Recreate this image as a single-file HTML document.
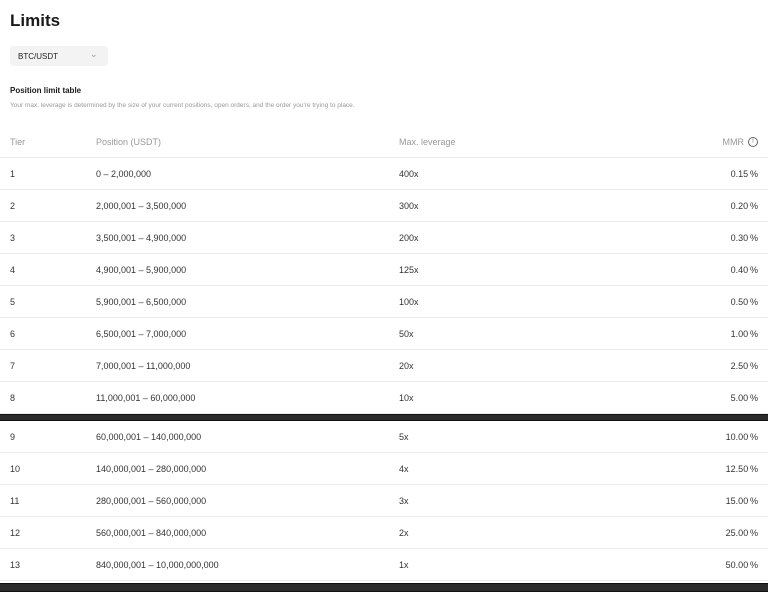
<!DOCTYPE html>
<html><head><style>
body{margin:0;width:768px;height:590px;background:#fff;font-family:"Liberation Sans",sans-serif;position:relative;overflow:hidden;color:#333}
.a{position:absolute;white-space:nowrap}
h1{position:absolute;left:10px;top:11px;margin:0;font-size:17px;font-weight:bold;color:#1a1a1a}
.sel{position:absolute;left:10px;top:46px;width:98px;height:20px;background:#f3f3f3;border-radius:4px;font-size:8px;color:#222}
.row{position:absolute;left:0;width:768px;height:32px;border-bottom:1px solid #ececec;font-size:9px;color:#333}
.row span{position:absolute;top:12px}
.c1{left:10px}.c2{left:96px}.c3{left:399px}.c4{right:10px}
.bar{position:absolute;left:0;width:768px;background:#2b2b2b;border-top:1px solid #111;border-bottom:1px solid #111}
.ic{position:absolute;right:10px;top:12px;width:8px;height:8px;border:1px solid #666;border-radius:50%;font-size:6px;text-align:center;line-height:8px;color:#666}
</style></head><body>
<h1>Limits</h1>
<div class="sel"><span class="a" style="left:8px;top:6px">BTC/USDT</span><span class="a" style="left:80px;top:3px;color:#999;font-size:9px">&#8964;</span></div>
<div class="a" style="left:10px;top:86px;font-size:8px;font-weight:bold;color:#1a1a1a">Position limit table</div>
<div class="a" style="left:10px;top:102px;font-size:6.5px;color:#999">Your max. leverage is determined by the size of your current positions, open orders, and the order you're trying to place.</div>
<div class="row" style="top:125px;color:#999"><span class="c1">Tier</span><span class="c2">Position (USDT)</span><span class="c3">Max. leverage</span><span style="right:24px">MMR</span><div class="ic">!</div></div>
<div class="row" style="top:157px"><span class="c1">1</span><span class="c2">0 – 2,000,000</span><span class="c3">400x</span><span class="c4">0.15&#8201;%</span></div>
<div class="row" style="top:189px"><span class="c1">2</span><span class="c2">2,000,001 – 3,500,000</span><span class="c3">300x</span><span class="c4">0.20&#8201;%</span></div>
<div class="row" style="top:221px"><span class="c1">3</span><span class="c2">3,500,001 – 4,900,000</span><span class="c3">200x</span><span class="c4">0.30&#8201;%</span></div>
<div class="row" style="top:253px"><span class="c1">4</span><span class="c2">4,900,001 – 5,900,000</span><span class="c3">125x</span><span class="c4">0.40&#8201;%</span></div>
<div class="row" style="top:285px"><span class="c1">5</span><span class="c2">5,900,001 – 6,500,000</span><span class="c3">100x</span><span class="c4">0.50&#8201;%</span></div>
<div class="row" style="top:317px"><span class="c1">6</span><span class="c2">6,500,001 – 7,000,000</span><span class="c3">50x</span><span class="c4">1.00&#8201;%</span></div>
<div class="row" style="top:349px"><span class="c1">7</span><span class="c2">7,000,001 – 11,000,000</span><span class="c3">20x</span><span class="c4">2.50&#8201;%</span></div>
<div class="row" style="top:381px"><span class="c1">8</span><span class="c2">11,000,001 – 60,000,000</span><span class="c3">10x</span><span class="c4">5.00&#8201;%</span></div>
<div class="bar" style="top:414px;height:5px"></div>
<div class="row" style="top:420px"><span class="c1">9</span><span class="c2">60,000,001 – 140,000,000</span><span class="c3">5x</span><span class="c4">10.00&#8201;%</span></div>
<div class="row" style="top:452px"><span class="c1">10</span><span class="c2">140,000,001 – 280,000,000</span><span class="c3">4x</span><span class="c4">12.50&#8201;%</span></div>
<div class="row" style="top:484px"><span class="c1">11</span><span class="c2">280,000,001 – 560,000,000</span><span class="c3">3x</span><span class="c4">15.00&#8201;%</span></div>
<div class="row" style="top:516px"><span class="c1">12</span><span class="c2">560,000,001 – 840,000,000</span><span class="c3">2x</span><span class="c4">25.00&#8201;%</span></div>
<div class="row" style="top:548px"><span class="c1">13</span><span class="c2">840,000,001 – 10,000,000,000</span><span class="c3">1x</span><span class="c4">50.00&#8201;%</span></div>
<div class="bar" style="top:583px;height:7px"></div>
</body></html>
